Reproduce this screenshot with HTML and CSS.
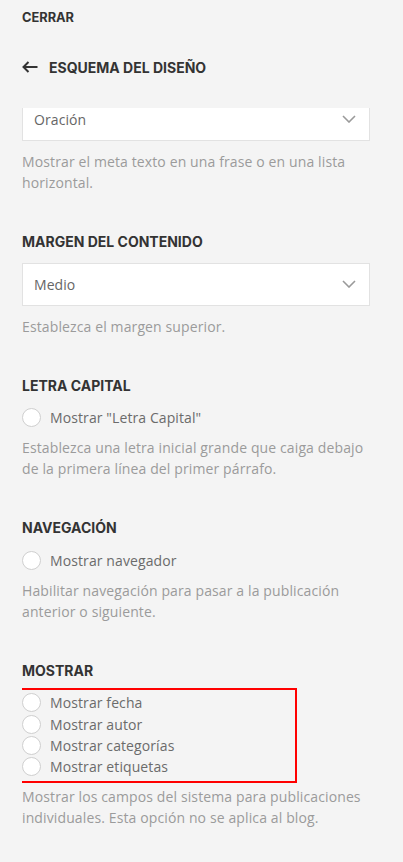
FILE: index.html
```html
<!DOCTYPE html>
<html lang="es">
<head>
<meta charset="utf-8">
<title>Esquema del diseño</title>
<link rel="stylesheet" href="styles.css">
</head>
<body>
<div class="panel">
  <header class="top">
    <div class="close">CERRAR</div>
    <div class="back">
      <svg class="back-icon" width="16" height="12" viewBox="0 0 16 12" aria-hidden="true">
        <path d="M15.5 6H1.5M6.5 1L1.5 6l5 5" fill="none" stroke="#333" stroke-width="2" stroke-linecap="butt" stroke-linejoin="miter"/>
      </svg>
      <span>ESQUEMA DEL DISEÑO</span>
    </div>
  </header>
  <div class="scroll">
    <div class="scroll-inner">
      <section class="section first">
        <div class="select">
          <span>Oración</span>
          <svg class="chev" width="14" height="8" viewBox="0 0 14 8" aria-hidden="true"><path d="M1 1l6 6 6-6" fill="none" stroke="#9a9a9a" stroke-width="1.6"/></svg>
        </div>
        <p class="desc">Mostrar el meta texto en una frase o en una lista horizontal.</p>
      </section>

      <section class="section">
        <h2 class="heading">MARGEN DEL CONTENIDO</h2>
        <div class="select">
          <span>Medio</span>
          <svg class="chev" width="14" height="8" viewBox="0 0 14 8" aria-hidden="true"><path d="M1 1l6 6 6-6" fill="none" stroke="#9a9a9a" stroke-width="1.6"/></svg>
        </div>
        <p class="desc">Establezca el margen superior.</p>
      </section>

      <section class="section">
        <h2 class="heading">LETRA CAPITAL</h2>
        <label class="radio single"><span class="circle"></span><span>Mostrar "Letra Capital"</span></label>
        <p class="desc">Establezca una letra inicial grande que caiga debajo de la primera línea del primer párrafo.</p>
      </section>

      <section class="section">
        <h2 class="heading">NAVEGACIÓN</h2>
        <label class="radio single"><span class="circle"></span><span>Mostrar navegador</span></label>
        <p class="desc">Habilitar navegación para pasar a la publicación anterior o siguiente.</p>
      </section>

      <section class="section">
        <h2 class="heading">MOSTRAR</h2>
        <div class="group">
          <label class="radio"><span class="circle"></span><span>Mostrar fecha</span></label>
          <label class="radio"><span class="circle"></span><span>Mostrar autor</span></label>
          <label class="radio"><span class="circle"></span><span>Mostrar categorías</span></label>
          <label class="radio"><span class="circle"></span><span>Mostrar etiquetas</span></label>
        </div>
        <p class="desc tight">Mostrar los campos del sistema para publicaciones individuales. Esta opción no se aplica al blog.</p>
      </section>
    </div>
  </div>
</div>
</body>
</html>
```

FILE: styles.css
```css
html, body {
  margin: 0;
  padding: 0;
  background: #f4f4f4;
}
body {
  width: 403px;
  height: 862px;
  overflow: hidden;
  font-family: "Open Sans", "Liberation Sans", sans-serif;
}
.panel {
  display: flex;
  flex-direction: column;
  height: 862px;
  padding-left: 22px;
  padding-right: 33px;
  box-sizing: border-box;
}
.top {
  height: 108px;
  flex: none;
}
.close {
  font-family: Inter, "DejaVu Sans", sans-serif;
  font-weight: 700;
  font-size: 12.8px;
  color: #333;
  line-height: 16px;
  padding-top: 10px;
}
.back {
  display: flex;
  align-items: center;
  gap: 11px;
  margin-top: 32px;
  height: 18px;
  font-family: Inter, "DejaVu Sans", sans-serif;
  font-weight: 700;
  font-size: 14px;
  color: #333;
}
.back-icon {
  display: block;
  flex: none;
}
.scroll {
  flex: 1;
  overflow: hidden;
}
.scroll-inner {
  margin-top: -10px;
}
.section {
  padding-top: 39px;
}
.section.first {
  padding-top: 0;
}
.heading {
  margin: 0;
  font-family: Inter, "DejaVu Sans", sans-serif;
  font-weight: 700;
  font-size: 14px;
  line-height: 20px;
  color: #333;
}
.select {
  height: 43px;
  box-sizing: border-box;
  background: #fff;
  border: 1px solid #e2e2e2;
  display: flex;
  align-items: center;
  justify-content: space-between;
  padding: 0 13px 0 11px;
  font-size: 14px;
  letter-spacing: 0.08px;
  color: #666;
}
.heading + .select {
  margin-top: 11px;
}
.chev {
  display: block;
  margin-top: -2px;
}
.desc {
  margin: 9.5px 0 0 0;
  font-size: 14px;
  line-height: 21px;
  letter-spacing: 0.12px;
  color: #9b9b9b;
}
.section.first .desc {
  margin-top: 10px;
}
.desc.tight {
  margin-top: 3px;
}
.radio {
  display: flex;
  align-items: center;
  height: 21.3px;
  font-size: 14px;
  letter-spacing: 0.1px;
  color: #6b6b6b;
  gap: 9px;
}
.radio.single {
  margin-top: 11.5px;
}
.radio.single + .desc {
  margin-top: 9px;
}
.circle {
  width: 19px;
  height: 19px;
  box-sizing: border-box;
  border: 1px solid #cfcfcf;
  border-radius: 50%;
  background: #fff;
  flex: none;
}
.group {
  margin-top: 7px;
  margin-left: -9px;
  width: 284px;
  box-sizing: border-box;
  border: 2px solid #f00;
  padding: 2px 0 4px 7px;
}
```
